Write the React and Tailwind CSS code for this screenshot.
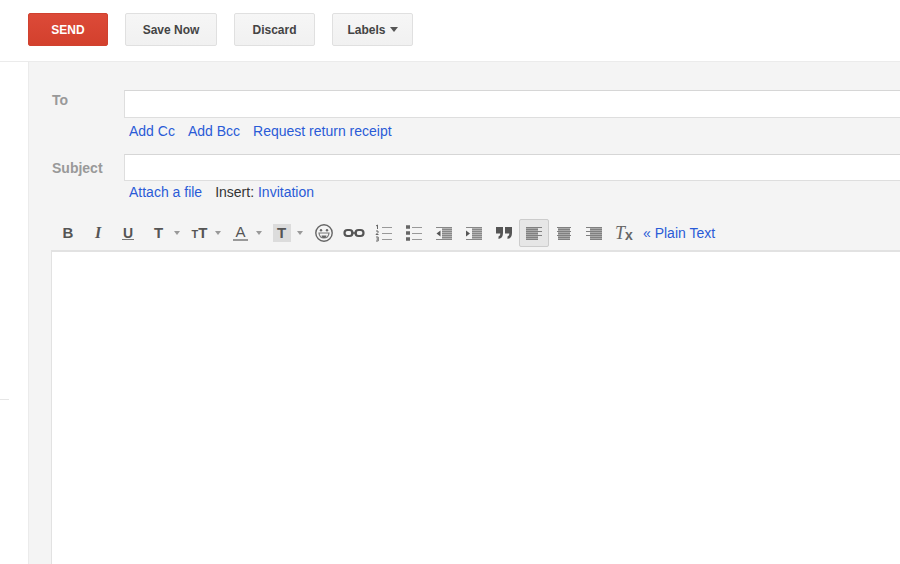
const headerButton =
  'flex h-[33px] items-center justify-center rounded-xs border border-[#e0e0e0] bg-linear-to-b from-[#f6f6f6] to-[#f1f1f1] text-xs font-bold text-[#444]';

const fieldClass =
  'block w-full border border-r-0 border-[#dedede] border-t-[#d6d6d6] bg-white px-2 text-sm text-[#222] outline-none';

const labelClass = 'w-18 shrink-0 text-sm font-bold text-[#999]';

function Link({ children }) {
  return (
    <a href="#" className="text-[#2a5bd7]">
      {children}
    </a>
  );
}

function Tool({ label, active, children }) {
  return (
    <button
      type="button"
      aria-label={label}
      aria-pressed={active}
      className={`flex h-7 w-[30px] shrink-0 items-center justify-center rounded-xs border text-[#555] ${
        active ? 'border-[#cccccc] bg-[#e6e6e6]' : 'border-transparent'
      }`}
    >
      {children}
    </button>
  );
}

function DropTool({ label, children }) {
  return (
    <button
      type="button"
      aria-label={label}
      className="flex h-7 w-[41px] shrink-0 items-center text-[#555]"
    >
      <span className="flex w-[31px] items-center justify-center">{children}</span>
      <svg className="h-1 w-1.5" viewBox="0 0 6 4" fill="#999">
        <path d="M0 0h6L3 4z" />
      </svg>
    </button>
  );
}

function Icon({ children }) {
  return (
    <svg className="h-5 w-5 shrink-0" viewBox="0 0 20 20" fill="none" stroke="currentColor">
      {children}
    </svg>
  );
}

function SmileIcon() {
  return (
    <Icon>
      <circle cx="10" cy="10" r="8.2" stroke="#666" strokeWidth="1.4" />
      <circle cx="7" cy="7.2" r="1.2" fill="#666" stroke="none" />
      <circle cx="13" cy="7.2" r="1.2" fill="#666" stroke="none" />
      <path d="M5 10h10c-.3 3.2-2.200 5-5 5s-4.700-1.800-5-5z" stroke="#777" strokeWidth="1.200" />
      <path d="M7.500 12.500h5L11.500 15h-3z" fill="#666" stroke="none" />
    </Icon>
  );
}

function LinkIcon() {
  return (
    <svg className="h-5 w-[22px] shrink-0" viewBox="0 0 22 20" fill="none" stroke="currentColor">
      <rect x="1.500" y="7" width="8" height="6" rx="3" strokeWidth="2.200" />
      <rect x="12.500" y="7" width="8" height="6" rx="3" strokeWidth="2.200" />
      <path d="M8 10h6" strokeWidth="1.500" />
    </svg>
  );
}

function NumberedIcon() {
  return (
    <Icon>
      <path d="M2 3l1.500-1v4M2 8h2v1.500l-2 2h2.500M2 14h2.200v4H2M2.500 16h1.700" stroke="#666" />
      <path d="M8 4.500h10M8 10.500h10M8 16.500h10" stroke="#999" />
    </Icon>
  );
}

function BulletIcon() {
  return (
    <Icon>
      <path d="M2 4h4M2 10h4M2 16h4" stroke="#666" strokeWidth="3.500" />
      <path d="M8 4.500h10M8 10.500h10M8 16.500h10" stroke="#999" />
    </Icon>
  );
}

function IndentIcon({ arrow }) {
  return (
    <Icon>
      <path d="M8 4h10v12H8z" fill="#b4b4b4" stroke="none" />
      <path d="M2 4.500h16M8 6.500h10M8 8.500h10M8 10.500h10M8 12.500h10M8 14.500h10M2 16.500h16" stroke="#888" />
      <path d={arrow} fill="currentColor" stroke="none" />
    </Icon>
  );
}

function QuoteIcon() {
  return (
    <Icon>
      <g fill="currentColor" stroke="none">
        <path d="M2 4h7v6c0 3.500-1.500 5.500-4.500 6v-2.500c1.200-.4 1.800-1.500 1.800-3H2z" />
        <path d="M11 4h7v6c0 3.500-1.500 5.500-4.500 6v-2.500c1.200-.4 1.800-1.500 1.800-3H11z" />
      </g>
    </Icon>
  );
}

function AlignIcon({ block, lines }) {
  return (
    <Icon>
      <path d={block} fill="#a9a9a9" stroke="none" />
      <path d={lines} stroke="#808080" />
    </Icon>
  );
}

function Toolbar() {
  return (
    <div role="toolbar" aria-label="Formatting" className="flex items-center pl-0.5">
      <Tool label="Bold">
        <span className="text-[15px] font-bold">B</span>
      </Tool>
      <Tool label="Italic">
        <span className="font-['Liberation_Serif',serif] text-base font-bold italic">I</span>
      </Tool>
      <Tool label="Underline">
        <span className="border-b border-[#777] px-px text-sm leading-3 font-bold">U</span>
      </Tool>
      <div className="mr-0.5 flex">
        <DropTool label="Font">
          <span className="text-[15px] font-bold">T</span>
        </DropTool>
        <DropTool label="Size">
          <span className="flex items-baseline font-bold">
            <span className="text-[11px]">T</span>
            <span className="text-[15px]">T</span>
          </span>
        </DropTool>
        <DropTool label="Text color">
          <span className="border-b-2 border-[#999] px-0.5 text-[15px] leading-[14px]">A</span>
        </DropTool>
        <DropTool label="Highlight color">
          <span className="flex h-[18px] w-[18px] items-center justify-center bg-[#dcdcdc] text-[15px] font-bold">
            T
          </span>
        </DropTool>
      </div>
      <Tool label="Insert emoticon">
        <SmileIcon />
      </Tool>
      <Tool label="Link">
        <LinkIcon />
      </Tool>
      <Tool label="Numbered list">
        <NumberedIcon />
      </Tool>
      <Tool label="Bulleted list">
        <BulletIcon />
      </Tool>
      <Tool label="Indent less">
        <IndentIcon arrow="M6.500 7.500v6L2.500 10.500z" />
      </Tool>
      <Tool label="Indent more">
        <IndentIcon arrow="M2 7.500v6l4-3z" />
      </Tool>
      <Tool label="Quote">
        <QuoteIcon />
      </Tool>
      <Tool label="Align left" active>
        <AlignIcon
          block="M2 4h12v13H2z"
          lines="M2 4.500h16M2 6.500h12M2 8.500h16M2 10.500h12M2 12.500h16M2 14.500h12M2 16.500h12"
        />
      </Tool>
      <Tool label="Align center">
        <AlignIcon
          block="M4 4h12v13H4z"
          lines="M3 4.500h14M4 6.500h12M3 8.500h14M4 10.500h12M3 12.500h14M4 14.500h12M4 16.500h12"
        />
      </Tool>
      <Tool label="Align right">
        <AlignIcon
          block="M6 4h12v13H6z"
          lines="M2 4.500h16M6 6.500h12M2 8.500h16M6 10.500h12M2 12.500h16M6 14.500h12M6 16.500h12"
        />
      </Tool>
      <Tool label="Remove formatting">
        <span className="flex items-end text-[#666]">
          <span className="font-['Liberation_Serif',serif] text-lg leading-4 italic">T</span>
          <span className="text-sm leading-3 font-bold">x</span>
        </span>
      </Tool>
      <a href="#" className="ml-1 text-sm whitespace-nowrap text-[#2a5bd7]">
        « Plain Text
      </a>
    </div>
  );
}

export default function App() {
  return (
    <div className="flex min-h-screen flex-col overflow-hidden bg-white font-['Liberation_Sans',Arial,sans-serif]">
      <header className="flex gap-[17px] border-b border-[#ebebeb] pt-[13px] pb-[15px] pl-7">
        <button
          type="button"
          className="h-[33px] w-20 rounded-xs border border-[#d0412f] bg-linear-to-b from-[#dc4a38] to-[#d3402d] text-xs font-bold text-white"
        >
          SEND
        </button>
        <button type="button" className={`${headerButton} w-[92px]`}>
          Save Now
        </button>
        <button type="button" className={`${headerButton} w-[81px]`}>
          Discard
        </button>
        <button type="button" className={`${headerButton} w-[81px] gap-1`}>
          Labels
          <svg className="h-[5px] w-2" viewBox="0 0 8 5" fill="#555">
            <path d="M0 0h8L4 5z" />
          </svg>
        </button>
      </header>

      <div className="flex flex-1">
        <aside className="w-7 shrink-0">
          <div className="h-[338px] w-[9px] border-b border-[#e6e6e6]" />
        </aside>

        <main className="flex min-w-0 flex-1 flex-col border-l border-[#ebebeb] bg-[#f4f4f4] pt-7 pl-[22px]">
          <div className="flex">
            <label htmlFor="to" className={`${labelClass} pl-px`}>
              To
            </label>
            <div className="min-w-0 flex-1 pl-px">
              <input id="to" type="text" className={`${fieldClass} h-7`} />
              <div className="flex gap-[13px] pt-[3px] pl-[5px] text-sm">
                <Link>Add Cc</Link>
                <Link>Add Bcc</Link>
                <Link>Request return receipt</Link>
              </div>
            </div>
          </div>

          <div className="flex pt-[13px]">
            <label htmlFor="subject" className={`${labelClass} pt-1 pl-px`}>
              Subject
            </label>
            <div className="min-w-0 flex-1 pl-px">
              <input id="subject" type="text" className={`${fieldClass} h-[27px]`} />
              <div className="flex gap-[13px] pt-px pl-[5px] text-sm">
                <Link>Attach a file</Link>
                <span className="text-[#333]">
                  Insert: <Link>Invitation</Link>
                </span>
              </div>
            </div>
          </div>

          <div className="pt-[17px] pb-[3px]">
            <Toolbar />
          </div>

          <textarea
            aria-label="Message body"
            className="w-full flex-1 resize-none border-t-2 border-l border-[#e2e2e2] bg-white p-2 text-sm text-[#222] outline-none"
          />
        </main>
      </div>
    </div>
  );
}
